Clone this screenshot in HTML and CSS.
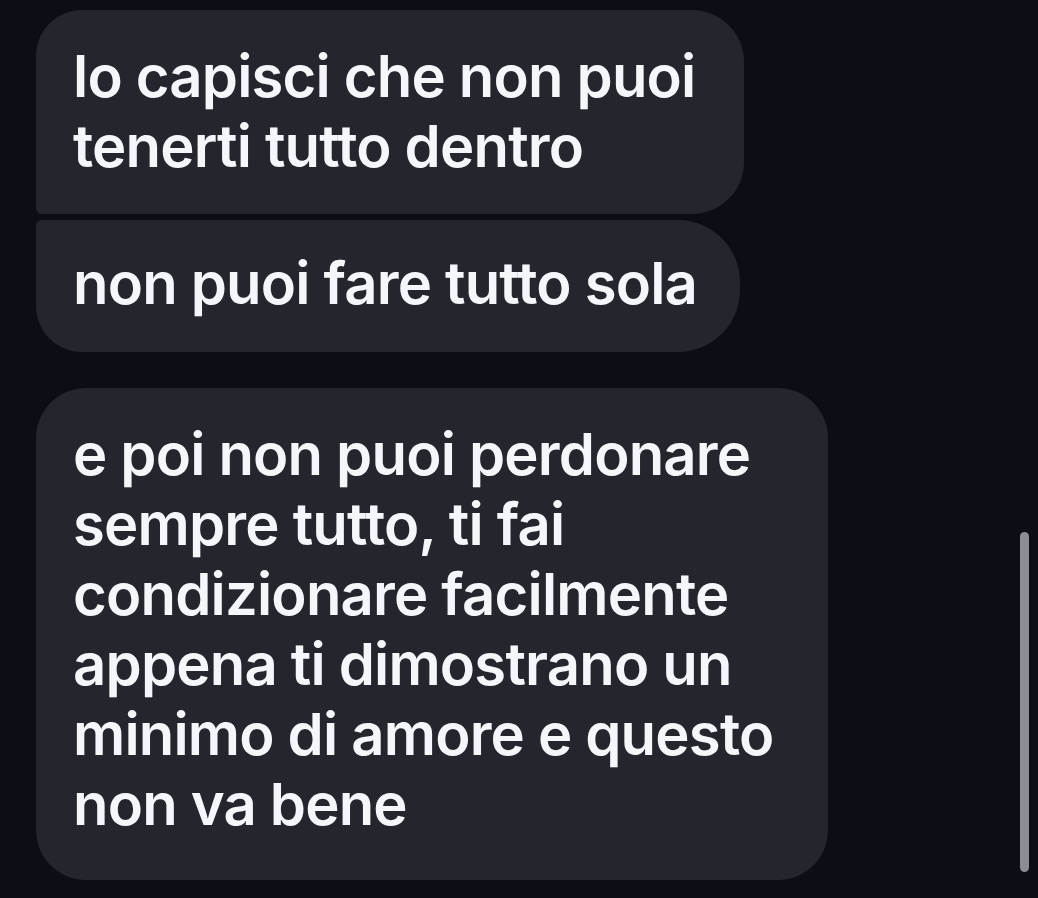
FILE: index.html
```html
<!DOCTYPE html>
<html lang="it">
<head>
<meta charset="utf-8">
<link rel="stylesheet" href="styles.css">
</head>
<body>
<div class="chat">
  <div class="group">
    <div class="bubble b1">lo capisci che non puoi<br>tenerti tutto dentro</div>
    <div class="bubble b2">non puoi fare tutto sola</div>
  </div>
  <div class="group">
    <div class="bubble b3">e poi non puoi perdonare<br>sempre tutto, ti fai<br>condizionare facilmente<br>appena ti dimostrano un<br>minimo di amore e questo<br>non va bene</div>
  </div>
</div>
<div class="scrollbar"></div>
</body>
</html>
```

FILE: styles.css
```css
html, body {
  margin: 0;
  padding: 0;
  background: #0b0f15;
  width: 1038px;
  height: 898px;
  overflow: hidden;
}
.chat {
  display: flex;
  flex-direction: column;
  gap: 36px;
  padding: 10px 0 0 36px;
}
.group {
  display: flex;
  flex-direction: column;
  gap: 6px;
}
.bubble {
  background: #23262c;
  color: #f4f6f9;
  font-family: Inter, "Noto Sans", sans-serif;
  font-weight: 600;
  font-size: 58px;
  line-height: 70px;
  letter-spacing: -0.8px;
  white-space: nowrap;
  box-sizing: border-box;
  padding: 31px 0 31px 37px;
}
.b1 {
  width: 708px;
  height: 204px;
  border-radius: 46px 52px 52px 6px;
}
.b2 {
  width: 704px;
  height: 132px;
  padding-top: 28px;
  border-radius: 6px 62px 62px 46px;
}
.b3 {
  width: 792px;
  height: 492px;
  border-radius: 50px;
}
.scrollbar {
  position: absolute;
  left: 1020px;
  top: 532px;
  width: 9px;
  height: 340px;
  border-radius: 5px;
  background: #8a8d91;
}
```
